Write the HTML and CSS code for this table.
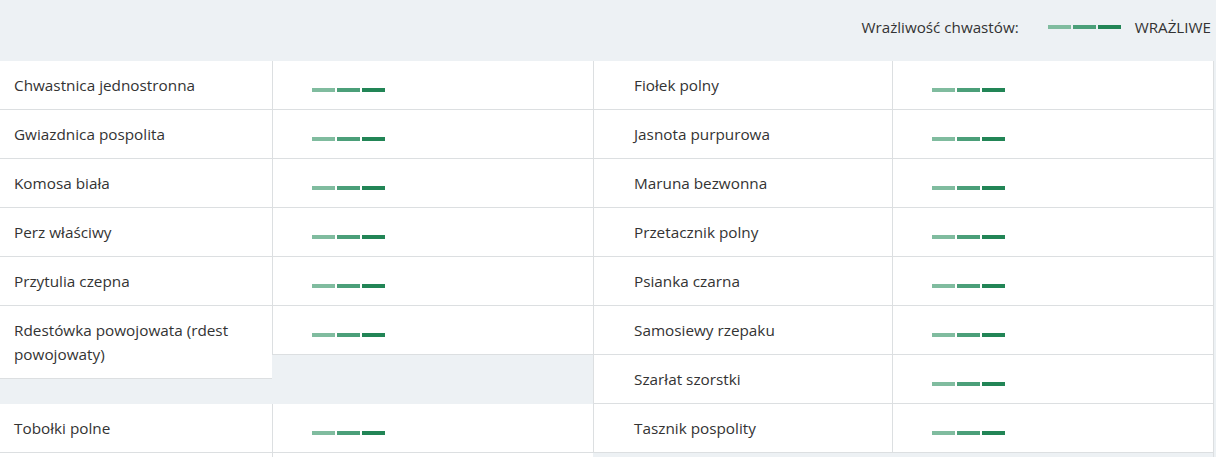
FILE: index.html
```html
<!DOCTYPE html>
<html lang="pl">
<head>
<meta charset="utf-8">
<title>Wrażliwość chwastów</title>
<link rel="stylesheet" href="styles.css">
</head>
<body>
<header class="legend">
  <span class="legend-label">Wrażliwość chwastów:</span>
  <span class="bar legend-bar"><i class="seg s1"></i><i class="seg s2"></i><i class="seg s3"></i></span>
  <span class="legend-value">WRAŻLIWE</span>
</header>
<div class="weeds">
  <div class="weed"><div class="weed-name">Chwastnica jednostronna</div><div class="weed-level"><span class="bar"><i class="seg s1"></i><i class="seg s2"></i><i class="seg s3"></i></span></div></div>
  <div class="weed"><div class="weed-name">Fiołek polny</div><div class="weed-level"><span class="bar"><i class="seg s1"></i><i class="seg s2"></i><i class="seg s3"></i></span></div></div>
  <div class="weed"><div class="weed-name">Gwiazdnica pospolita</div><div class="weed-level"><span class="bar"><i class="seg s1"></i><i class="seg s2"></i><i class="seg s3"></i></span></div></div>
  <div class="weed"><div class="weed-name">Jasnota purpurowa</div><div class="weed-level"><span class="bar"><i class="seg s1"></i><i class="seg s2"></i><i class="seg s3"></i></span></div></div>
  <div class="weed"><div class="weed-name">Komosa biała</div><div class="weed-level"><span class="bar"><i class="seg s1"></i><i class="seg s2"></i><i class="seg s3"></i></span></div></div>
  <div class="weed"><div class="weed-name">Maruna bezwonna</div><div class="weed-level"><span class="bar"><i class="seg s1"></i><i class="seg s2"></i><i class="seg s3"></i></span></div></div>
  <div class="weed"><div class="weed-name">Perz właściwy</div><div class="weed-level"><span class="bar"><i class="seg s1"></i><i class="seg s2"></i><i class="seg s3"></i></span></div></div>
  <div class="weed"><div class="weed-name">Przetacznik polny</div><div class="weed-level"><span class="bar"><i class="seg s1"></i><i class="seg s2"></i><i class="seg s3"></i></span></div></div>
  <div class="weed"><div class="weed-name">Przytulia czepna</div><div class="weed-level"><span class="bar"><i class="seg s1"></i><i class="seg s2"></i><i class="seg s3"></i></span></div></div>
  <div class="weed"><div class="weed-name">Psianka czarna</div><div class="weed-level"><span class="bar"><i class="seg s1"></i><i class="seg s2"></i><i class="seg s3"></i></span></div></div>
  <div class="weed"><div class="weed-name">Rdestówka powojowata (rdest powojowaty)</div><div class="weed-level"><span class="bar"><i class="seg s1"></i><i class="seg s2"></i><i class="seg s3"></i></span></div></div>
  <div class="weed"><div class="weed-name">Samosiewy rzepaku</div><div class="weed-level"><span class="bar"><i class="seg s1"></i><i class="seg s2"></i><i class="seg s3"></i></span></div></div>
  <div class="weed"><div class="weed-name">Szarłat szorstki</div><div class="weed-level"><span class="bar"><i class="seg s1"></i><i class="seg s2"></i><i class="seg s3"></i></span></div></div>
  <div class="weed"><div class="weed-name">Tobołki polne</div><div class="weed-level"><span class="bar"><i class="seg s1"></i><i class="seg s2"></i><i class="seg s3"></i></span></div></div>
  <div class="weed"><div class="weed-name">Tasznik pospolity</div><div class="weed-level"><span class="bar"><i class="seg s1"></i><i class="seg s2"></i><i class="seg s3"></i></span></div></div>
  <div class="weed"><div class="weed-name"></div><div class="weed-level"></div></div>
</div>
</body>
</html>
```
FILE: styles.css
```css
html, body {
  margin: 0;
  height: 100%;
}

body {
  background: #edf1f4;
  font-family: "Open Sans", "DejaVu Sans", sans-serif;
  color: #333;
  overflow: hidden;
}

.legend {
  height: 61px;
  box-sizing: border-box;
  padding: 17px 5px 0 0;
  display: flex;
  justify-content: flex-end;
  align-items: flex-start;
  font-size: 15.2px;
  line-height: 20px;
}

.legend-label {
  margin-right: 29px;
}

.legend-bar {
  margin-top: 8px;
  margin-right: 14px;
}

.bar {
  display: flex;
  gap: 2px;
}

.seg {
  display: block;
  width: 23px;
  height: 4px;
}

.s1 { background: #80bc9f; }
.s2 { background: #4b9f79; }
.s3 { background: #228556; }

.weeds {
  display: flow-root;
  width: 1240px;
  margin-left: -27px;
  border-right: 1px solid #dcdfe1;
}

.weed {
  float: left;
  width: 620px;
  box-sizing: border-box;
  border-left: 1px solid #dcdfe1;
  display: flex;
  align-items: flex-start;
}

.weed-name {
  flex: 0 0 298px;
  box-sizing: border-box;
  min-height: 49px;
  padding: 12px 10px 12px 40px;
  font-size: 15.3px;
  line-height: 24px;
  background: #fff;
  border-bottom: 1px solid #dcdfe1;
}

.weed-level {
  flex: 1 1 auto;
  height: 49px;
  box-sizing: border-box;
  padding: 27px 0 0 39px;
  background: #fff;
  border-left: 1px solid #dcdfe1;
  border-bottom: 1px solid #dcdfe1;
}
```
